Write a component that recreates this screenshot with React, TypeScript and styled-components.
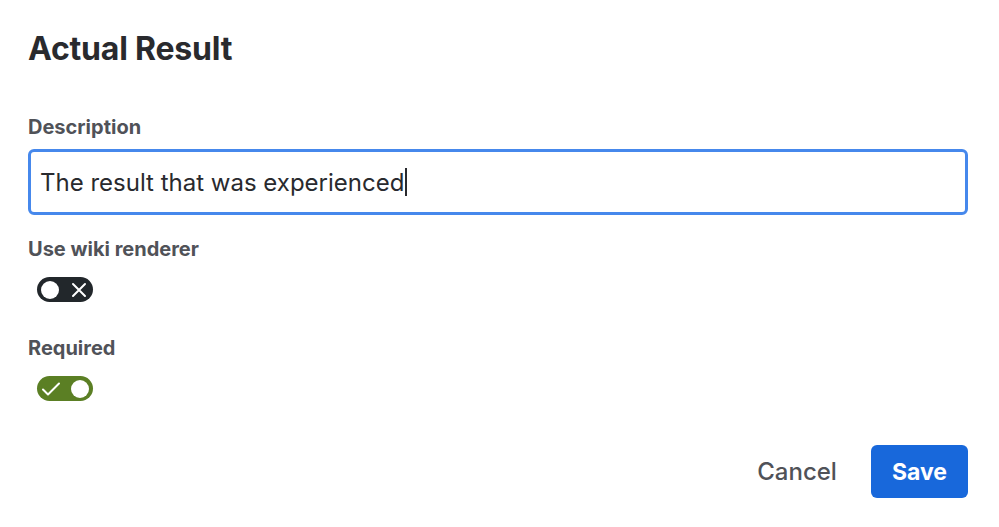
import * as React from "react"
import styled, { createGlobalStyle } from "styled-components"

const GlobalStyle = createGlobalStyle`
  html, body {
    margin: 0;
    padding: 0;
    background: #ffffff;
    font-family: Inter, "Noto Sans", sans-serif;
    color: #292a2e;
  }
`

const Dialog = styled.div`
  width: 999px;
  height: 527px;
  box-sizing: border-box;
  padding: 25px 31px 0 28px;
  display: flex;
  flex-direction: column;
`

const Title = styled.h1`
  margin: 0;
  font-size: 32px;
  line-height: 48px;
  font-weight: 700;
  color: #292a2e;
  letter-spacing: -0.2px;
`

const Field = styled.div<{ $top: number }>`
  margin-top: ${(p) => p.$top}px;
  display: flex;
  flex-direction: column;
`

const Label = styled.label`
  font-size: 20px;
  line-height: 24px;
  font-weight: 700;
  color: #505258;
`

const Input = styled.div`
  margin-top: 10px;
  height: 66px;
  box-sizing: border-box;
  border: 3px solid #4688ec;
  border-radius: 6px;
  padding: 0 9px;
  display: flex;
  align-items: center;
  font-size: 24px;
  color: #292a2e;
`

const Caret = styled.span`
  display: inline-block;
  width: 1.5px;
  height: 28px;
  background: #292a2e;
  margin-left: 1px;
`

const Toggle = styled.div<{ $on: boolean }>`
  margin-top: 16px;
  margin-left: 9px;
  width: 56px;
  height: 25px;
  border-radius: 13px;
  background: ${(p) => (p.$on ? "#5b7f24" : "#22272b")};
  display: flex;
  align-items: center;
  justify-content: space-between;
  flex-direction: ${(p) => (p.$on ? "row-reverse" : "row")};
  padding: 0 4px;
  box-sizing: border-box;
`

const Knob = styled.span`
  width: 18px;
  height: 18px;
  border-radius: 50%;
  background: #ffffff;
`

const IconSlot = styled.span`
  width: 20px;
  height: 20px;
  display: flex;
  align-items: center;
  justify-content: center;
`

const Footer = styled.div`
  margin-top: auto;
  margin-bottom: 29px;
  display: flex;
  justify-content: flex-end;
  align-items: center;
  gap: 12px;
`

const Button = styled.button<{ $primary?: boolean }>`
  height: 53px;
  padding: 0 ${(p) => (p.$primary ? 21 : 22)}px;
  border: none;
  border-radius: 6px;
  font-family: Inter, "Noto Sans", sans-serif;
  font-size: ${(p) => (p.$primary ? 23 : 24)}px;
  font-weight: ${(p) => (p.$primary ? 700 : 500)};
  background: ${(p) => (p.$primary ? "#1868db" : "transparent")};
  color: ${(p) => (p.$primary ? "#ffffff" : "#505258")};
`

const Cross = () => (
  <svg width="18" height="18" viewBox="0 0 18 18">
    <path d="M3 3 L15 15 M15 3 L3 15" stroke="#fff" strokeWidth="2" strokeLinecap="round" />
  </svg>
)

const Check = () => (
  <svg width="20" height="18" viewBox="0 0 20 18">
    <path d="M2 9.5 L7 14.5 L18 3.5" stroke="#fff" strokeWidth="2" fill="none" strokeLinecap="round" strokeLinejoin="round" />
  </svg>
)

export default function App() {
  return (
    <>
      <GlobalStyle />
      <Dialog>
        <Title>Actual Result</Title>
        <Field $top={42}>
          <Label>Description</Label>
          <Input>
            The result that was experienced
            <Caret />
          </Input>
        </Field>
        <Field $top={22}>
          <Label>Use wiki renderer</Label>
          <Toggle $on={false}>
            <Knob />
            <IconSlot>
              <Cross />
            </IconSlot>
          </Toggle>
        </Field>
        <Field $top={34}>
          <Label>Required</Label>
          <Toggle $on>
            <Knob />
            <IconSlot>
              <Check />
            </IconSlot>
          </Toggle>
        </Field>
        <Footer>
          <Button>Cancel</Button>
          <Button $primary>Save</Button>
        </Footer>
      </Dialog>
    </>
  )
}
